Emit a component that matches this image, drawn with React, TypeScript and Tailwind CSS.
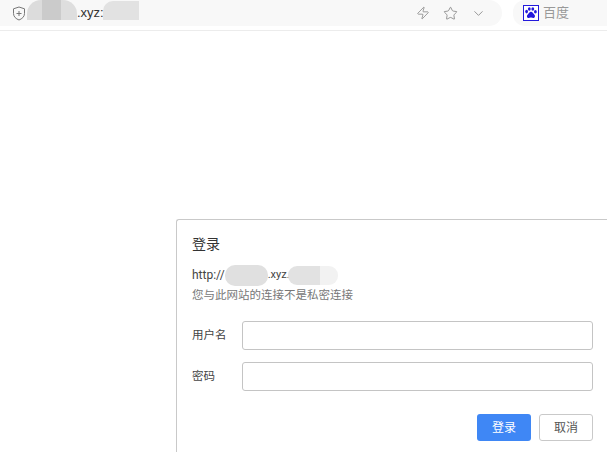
import { ChevronDown, Star, Zap } from 'lucide-react';

const cjk = { fontFamily: '"Liberation Sans", "Noto Sans CJK SC", sans-serif' };

function ShieldIcon() {
  return (
    <svg width="14" height="15" viewBox="0 0 14 15" fill="none" stroke="#777" strokeWidth="1">
      <path d="M7 1 L12.5 2.8 V7.5 C12.5 10.8 10 12.8 7 14 C4 12.8 1.5 10.8 1.5 7.5 V2.8 Z" />
      <path d="M7 5 V10 M4.5 7.5 H9.5" />
    </svg>
  );
}

function BaiduIcon() {
  return (
    <svg width="16" height="16" viewBox="0 0 16 16">
      <rect x="0.5" y="0.5" width="15" height="15" fill="#fff" stroke="#2319dc" />
      <g fill="#2319dc">
        <ellipse cx="3.6" cy="6.6" rx="1.4" ry="1.8" />
        <ellipse cx="6.3" cy="4" rx="1.4" ry="1.8" />
        <ellipse cx="9.8" cy="4" rx="1.4" ry="1.8" />
        <ellipse cx="12.4" cy="6.8" rx="1.4" ry="1.8" />
        <path d="M8 6.8 C9.6 6.8 10 8.4 11.2 9.4 C12.6 10.6 12 13 10 13 C9 13 8.8 12.6 8 12.6 C7.2 12.6 6.8 13 5.8 13 C3.8 13 3.4 10.6 4.8 9.4 C6 8.4 6.4 6.8 8 6.8 Z" />
      </g>
    </svg>
  );
}

function Field({ label }: { label: string }) {
  return (
    <div className="flex items-center">
      <label className="w-[50px] text-[11.5px] leading-none text-[#444]">{label}</label>
      <input className="h-[29px] w-[351px] rounded-[3px] border border-[#c4c4c4] bg-white" />
    </div>
  );
}

export default function App() {
  return (
    <div className="h-[452px] w-[607px] overflow-hidden bg-white" style={cjk}>
      {/* browser toolbar */}
      <div className="flex h-[31px] items-start border-b border-[#ececec] bg-white">
        <div className="flex h-[26px] w-[502px] items-center rounded-r-[14px] bg-[#f8f8f8] pl-[12px] pr-[16px]">
          <ShieldIcon />
          <span className="mb-[6px] ml-[1px] h-[20px] w-[50px] rounded-t-[14px] bg-[linear-gradient(90deg,#dcdcdc_30%,#cbcbcb_30%,#cbcbcb_68%,#dedede_68%)]" />
          <span className="text-[13px] font-medium text-[#333]">.xyz:.</span>
          <span className="-ml-[4px] mb-[6px] h-[19px] w-[36px] rounded-tl-[10px] bg-[#e2e2e2]" />
          <div className="ml-auto flex items-center gap-[13px] pl-[1px] text-[#777]">
            <Zap size={14} strokeWidth={1.2} />
            <Star size={15} strokeWidth={1.2} />
            <ChevronDown size={15} strokeWidth={1.2} />
          </div>
        </div>
        <div className="ml-[11px] flex h-[26px] flex-1 items-center rounded-l-[12px] bg-[#f8f8f8] pl-[10px]">
          <BaiduIcon />
          <span className="ml-[4px] text-[13px] text-[#999]">百度</span>
        </div>
      </div>

      {/* login dialog */}
      <div className="ml-[176px] mt-[188px] h-[260px] w-[431px] rounded-tl-[3px] border-l border-t border-[#c9c9c9] bg-white pl-[15px] pr-[14px] pt-[15px]">
        <h1 className="text-[14px] font-normal leading-[18px] text-[#333]">登录</h1>
        <div className="mt-[13px] flex h-[18px] items-center font-['Roboto'] text-[12px] text-[#444]">
          <span>http://</span>
          <span className="h-[21px] w-[43px] rounded-[10px] bg-[#e0e0e0]" />
          <span className="w-[20px] text-[11px]">.xyz.</span>
          <span className="h-[19px] w-[50px] rounded-[9px] bg-[linear-gradient(90deg,#e2e2e2_65%,#f2f2f2_65%)]" />
        </div>
        <p className="mt-[4px] text-[11.5px] leading-[14px] text-[#777]">您与此网站的连接不是私密连接</p>
        <div className="mt-[19px] flex flex-col gap-[12px]">
          <Field label="用户名" />
          <Field label="密码" />
        </div>
        <div className="mt-[23px] flex justify-end gap-[8px]">
          <button className="h-[27px] w-[54px] rounded-[3px] bg-[#3f87f5] text-[12px] text-white">登录</button>
          <button className="h-[27px] w-[54px] rounded-[3px] border border-[#c9c9c9] bg-white text-[12px] text-[#555]">取消</button>
        </div>
      </div>
    </div>
  );
}
